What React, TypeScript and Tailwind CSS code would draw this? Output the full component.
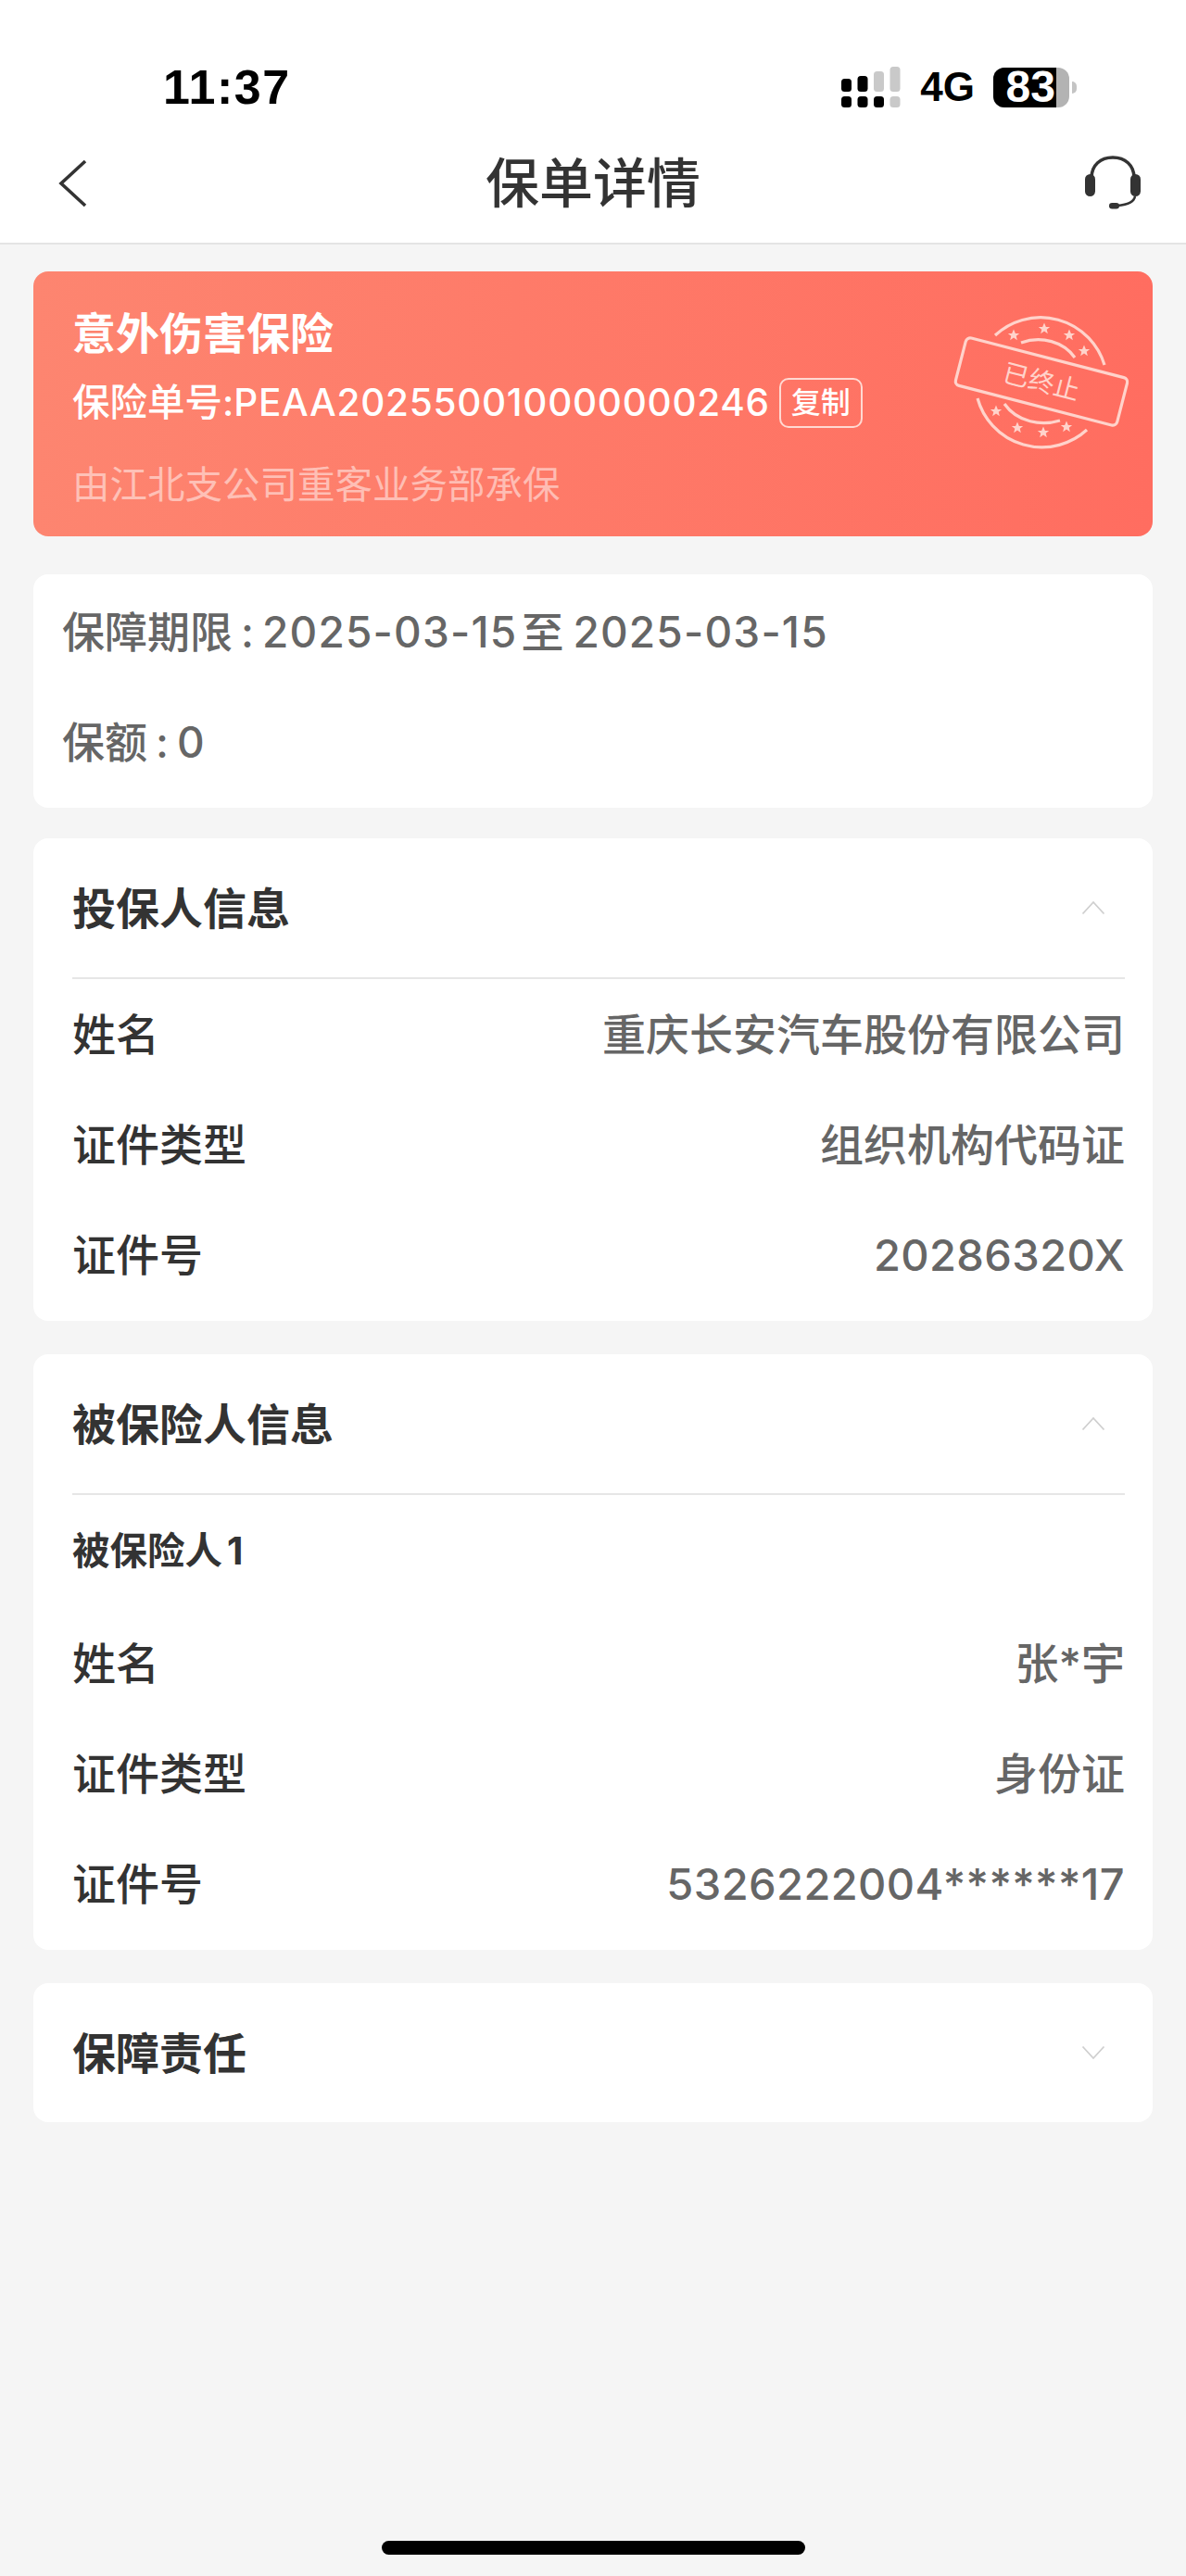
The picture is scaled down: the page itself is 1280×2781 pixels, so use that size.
import React from "react";

const FONT = "[font-family:Inter,'Noto_Sans_CJK_SC',sans-serif]";

function SignalIcon() {
  const black = "#000";
  const gray = "#c9c9c9";
  return (
    <svg width="64" height="44" viewBox="0 0 64 44">
      <rect x="0" y="32" width="11" height="12" rx="3.5" fill={black} />
      <rect x="0" y="13" width="11" height="14" rx="3.5" fill={black} />
      <rect x="17.5" y="32" width="11" height="12" rx="3.5" fill={black} />
      <rect x="17.5" y="10" width="11" height="17" rx="3.5" fill={black} />
      <rect x="35" y="32" width="11" height="12" rx="3.5" fill={black} />
      <rect x="35" y="5" width="11" height="22" rx="3.5" fill={gray} />
      <rect x="52.5" y="32" width="11" height="12" rx="3.5" fill={gray} />
      <rect x="52.5" y="0" width="11" height="27" rx="3.5" fill={gray} />
    </svg>
  );
}

function Battery() {
  return (
    <div className="flex items-center">
      <div className="flex h-[43px] w-[82px] overflow-hidden rounded-[12px] bg-[#b3b3b3]">
        <div className="flex h-full w-[68px] items-center justify-end bg-black pr-[1px]">
          <span className="text-[48px] font-bold leading-none text-white [font-family:'Liberation_Sans',sans-serif]">
            83
          </span>
        </div>
      </div>
      <div className="ml-[3px] h-[13px] w-[5px] rounded-r-full bg-[#c4c4c4]" />
    </div>
  );
}

function Headset() {
  return (
    <svg width="62" height="60" viewBox="0 0 62 60" fill="none">
      <path d="M8 24C8 10 18 2 31 2C44 2 54 10 54 24" stroke="#333" strokeWidth="3.5" />
      <rect x="1" y="20" width="11" height="24" rx="5.5" fill="#333" />
      <rect x="50" y="20" width="11" height="24" rx="5.5" fill="#333" />
      <path d="M55 44C54 50 47 53 36 54" stroke="#333" strokeWidth="2.5" />
      <rect x="27" y="51" width="11" height="6.5" rx="3.2" fill="#333" />
    </svg>
  );
}

function Chevron({ up }: { up: boolean }) {
  return (
    <svg width="26" height="16" viewBox="0 0 26 16" fill="none" className={up ? "" : "rotate-180"}>
      <path d="M1.5 14.5L13 2L24.5 14.5" stroke="#cfcfcf" strokeWidth="1.8" />
    </svg>
  );
}

function Stamp() {
  const c = "#ffd3cb";
  const stars = [
    [-30, -50], [3, -57], [30, -50], [46, -33],
    [-49, 32], [-26, 50], [2, 55], [27, 49],
  ];
  return (
    <svg width="200" height="160" viewBox="-100 -80 200 160" fill="none">
      <path d="M-50 -50A72 72 0 0 1 68 -18" stroke={c} strokeWidth="3.2" />
      <path d="M-69 18A72 72 0 0 0 49 52" stroke={c} strokeWidth="3.2" />
      <path d="M-22 -42C0 -50 24 -43 36 -26" stroke={c} strokeWidth="3.2" />
      <path d="M-40 24C-26 44 0 48 20 42" stroke={c} strokeWidth="3.2" />
      {stars.map(([x, y], i) => (
        <polygon
          key={i}
          transform={`translate(${x} ${y}) scale(6.5)`}
          points="0,-1 0.29,-0.31 0.95,-0.31 0.42,0.12 0.59,0.81 0,0.4 -0.59,0.81 -0.42,0.12 -0.95,-0.31 -0.29,-0.31"
          fill={c}
        />
      ))}
      <g transform="rotate(14.5)">
        <rect x="-90" y="-26.5" width="180" height="53" rx="5" stroke={c} strokeWidth="3.2" />
        <text
          x="0"
          y="10"
          textAnchor="middle"
          fontSize="28"
          fill={c}
          fontFamily="'Noto Sans CJK SC', sans-serif"
          fontWeight="400"
        >
          已终止
        </text>
      </g>
    </svg>
  );
}

function Row({ label, value, wide }: { label: string; value: string; wide?: boolean }) {
  return (
    <div className="flex h-[119px] items-center justify-between">
      <span className="text-[47px] font-medium leading-none text-[#333333]">{label}</span>
      <span className={`text-[47px] font-medium leading-none text-[#666666] ${wide ? "tracking-[0.4px]" : ""}`}>{value}</span>
    </div>
  );
}

function SectionHead({ title, up, divider }: { title: string; up: boolean; divider: boolean }) {
  return (
    <div className={`flex items-center justify-between ${divider ? "h-[152px] border-b-2 border-[#e6e6e6]" : "h-[150px]"}`}>
      <span className="text-[47px] font-bold leading-none text-[#333333]">{title}</span>
      <span className="mr-[21px] flex">
        <Chevron up={up} />
      </span>
    </div>
  );
}

export default function App() {
  return (
    <div className={`flex h-[2781px] w-[1280px] flex-col overflow-hidden bg-[#f5f5f5] ${FONT}`}>
      <header className="h-[264px] shrink-0 border-b-2 border-[#e4e4e4] bg-white">
        <div className="flex h-[134px] items-start justify-between pl-[176px] pr-[118px] pt-[72px]">
          <span className="text-[52px] font-bold leading-[44px] tracking-[1.5px] text-black [font-family:'Liberation_Sans',sans-serif]">
            11:37
          </span>
          <div className="flex items-center">
            <SignalIcon />
            <span className="ml-[21px] mr-[20px] text-[44px] font-bold leading-none text-black [font-family:'Liberation_Sans',sans-serif]">
              4G
            </span>
            <Battery />
          </div>
        </div>
        <div className="flex h-[128px] items-center justify-between pl-[62px] pr-[48px]">
          <div className="w-[48px]">
            <svg width="32" height="52" viewBox="0 0 32 52" fill="none">
              <path d="M30 2L4 26L30 50" stroke="#333" strokeWidth="3.6" />
            </svg>
          </div>
          <span className="text-[58px] font-medium leading-none text-[#333333]">保单详情</span>
          <Headset />
        </div>
      </header>

      <main className="flex flex-col px-[36px] pt-[29px]">
        <section className="relative h-[286px] rounded-[16px] bg-gradient-to-r from-[#fd8570] to-[#ff6d60] pl-[42px] pt-[40px]">
          <div className="text-[47px] font-bold leading-[54px] text-white">意外伤害保险</div>
          <div className="mt-[21px] flex h-[54px] items-center">
            <span className="text-[40.5px] font-medium leading-none text-white">
              保险单号:<span className="tracking-[0.7px]">PEAA202550010000000246</span>
            </span>
            <span className="ml-[10px] flex h-[54px] w-[90px] items-center justify-center rounded-[10px] border-2 border-[#ffd9d2] text-[32px] font-medium leading-none text-white">
              复制
            </span>
          </div>
          <div className="mt-[38px] text-[40.5px] leading-[48px] text-white/50">由江北支公司重客业务部承保</div>
          <div className="absolute left-[988px] top-[39px]">
            <Stamp />
          </div>
        </section>

        <section className="mt-[41px] flex h-[252px] flex-col rounded-[16px] bg-white pl-[31px] pt-[37px]">
          <div className="flex text-[46px] font-medium leading-[50px] text-[#666666]">
            <span>保障期限</span>
            <span className="mx-[9px]">:</span>
            <span className="tracking-[1.2px]">2025-03-15</span>
            <span className="ml-[4px] mr-[10px]">至</span>
            <span className="tracking-[1.2px]">2025-03-15</span>
          </div>
          <div className="mt-[69px] flex text-[46px] font-medium leading-[50px] text-[#666666]">
            <span>保额</span>
            <span className="mx-[9px]">:</span>
            <span>0</span>
          </div>
        </section>

        <section className="mt-[33px] rounded-[16px] bg-white pb-[12px] pl-[42px] pr-[30px]">
          <SectionHead title="投保人信息" up divider />
          <Row label="姓名" value="重庆长安汽车股份有限公司" />
          <Row label="证件类型" value="组织机构代码证" />
          <Row label="证件号" value="20286320X" wide />
        </section>

        <section className="mt-[36px] rounded-[16px] bg-white pb-[12px] pl-[42px] pr-[30px]">
          <SectionHead title="被保险人信息" up divider />
          <div className="flex h-[122px] items-center text-[40.5px] font-bold leading-none text-[#333333]">
            <span>被保险人</span>
            <span className="ml-[5px]">1</span>
          </div>
          <Row label="姓名" value="张*宇" />
          <Row label="证件类型" value="身份证" />
          <Row label="证件号" value="5326222004******17" wide />
        </section>

        <section className="mt-[36px] rounded-[16px] bg-white pl-[42px] pr-[30px]">
          <SectionHead title="保障责任" up={false} divider={false} />
        </section>
      </main>

      <div className="mt-auto flex justify-center pb-[23px]">
        <div className="h-[15px] w-[457px] rounded-full bg-black" />
      </div>
    </div>
  );
}
